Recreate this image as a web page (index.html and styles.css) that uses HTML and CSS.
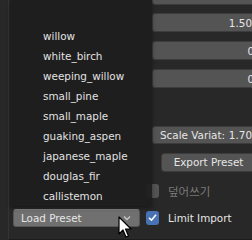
FILE: index.html
```html
<!DOCTYPE html>
<html lang="en">
<head>
    <meta charset="UTF-8">
    <title>Presets</title>
    <link rel="stylesheet" href="styles.css">
</head>
<body>
    <div class="panel">
        <div class="row row-stub">
            <div class="label"></div>
            <div class="field stub"></div>
        </div>
        <div class="row">
            <div class="label"></div>
            <div class="field"><span class="val">1.50</span></div>
        </div>
        <div class="row">
            <div class="label"></div>
            <div class="field"><span class="val cut">0</span></div>
        </div>
        <div class="row">
            <div class="label"></div>
            <div class="field"><span class="val cut">0</span></div>
        </div>
        <div class="row row-scale">
            <div class="label"></div>
            <div class="field split"><span>Scale Variat:</span><span class="val">1.70</span></div>
        </div>
        <div class="row row-btn">
            <div class="label"></div>
            <div class="btn">Export Preset</div>
        </div>
        <div class="row row-check">
            <div class="left"></div>
            <div class="check"><span class="box"></span><span class="check-label dim ko">덮어쓰기</span></div>
        </div>
        <div class="row row-check row-last">
            <div class="left">
                <div class="dropdown">
                    <span>Load Preset</span>
                    <svg class="chev" width="8" height="6" viewBox="0 0 8 6"><path d="M1 1.5 L4 4.5 L7 1.5" fill="none" stroke="#c8c8c8" stroke-width="1.3"/></svg>
                </div>
            </div>
            <div class="check"><span class="box on"><svg width="11" height="11" viewBox="0 0 11 11"><path d="M2 5.8 L4.5 8.2 L9 2.8" fill="none" stroke="#fff" stroke-width="1.6"/></svg></span><span class="check-label">Limit Import</span></div>
        </div>
    </div>

    <ul class="menu">
        <li>willow</li>
        <li>white_birch</li>
        <li>weeping_willow</li>
        <li>small_pine</li>
        <li>small_maple</li>
        <li>guaking_aspen</li>
        <li>japanese_maple</li>
        <li>douglas_fir</li>
        <li>callistemon</li>
    </ul>

    <svg class="cursor" width="15" height="24" viewBox="0 0 15 24">
        <path d="M1 1 L1 18 L5 14 L8 21 L10.5 20 L7.5 13 L13 13 Z" fill="#fff" stroke="#000" stroke-width="1.2" stroke-linejoin="round"/>
    </svg>
</body>
</html>
```

FILE: styles.css
```css
* {
    margin: 0;
    padding: 0;
    box-sizing: border-box;
}

body {
    width: 252px;
    height: 240px;
    overflow: hidden;
    background-color: #282828;
    color: #e6e6e6;
    font-family: 'DejaVu Sans', sans-serif;
    font-size: 10.4px;
    position: relative;
}

.panel {
    height: 240px;
    border-left: 1px solid #343434;
    margin-left: 8px;
    border-bottom: 1px solid #1c1c1c;
    display: flex;
    flex-direction: column;
}

.row {
    display: flex;
    margin-top: 9px;
}

.row-stub {
    margin-top: 0;
}

.label {
    width: 143px;
}

.field {
    width: 100px;
    height: 19px;
    background-color: #545454;
    border: 1px solid #3c3c3c;
    border-right: none;
    border-radius: 3px 0 0 3px;
    display: flex;
    align-items: center;
    justify-content: flex-end;
    white-space: nowrap;
    overflow: hidden;
}

.field .val {
    margin-right: 0;
}

.field .val.cut {
    margin-right: -2px;
}

.field.stub {
    height: 5px;
    border-top: none;
    border-radius: 0 0 0 3px;
}

.row-stub + .row {
    margin-top: 8px;
}

.row-scale {
    margin-top: 38px;
}

.row-scale .field {
    height: 18px;
    justify-content: space-between;
    padding-left: 7px;
}

.row-btn {
    margin-top: 9px;
}

.row-btn .label {
    width: 152px;
}

.btn {
    flex: 1;
    height: 19px;
    background-color: #545454;
    border: 1px solid #3c3c3c;
    border-right: none;
    border-radius: 4px 0 0 4px;
    text-align: center;
    line-height: 17px;
    padding-left: 3px;
}

.row-check {
    margin-top: 11px;
    height: 15px;
}

.row-last {
    margin-top: 10px;
    height: 19px;
    align-items: center;
}

.left {
    width: 137px;
    padding-left: 4px;
}

.dropdown {
    width: 127px;
    height: 18px;
    background-color: #707070;
    border: 1px solid #555;
    border-top-color: #808080;
    border-radius: 3px;
    display: flex;
    align-items: center;
    justify-content: space-between;
    padding: 0 8px 0 7px;
}

.check {
    display: flex;
    align-items: center;
    gap: 9px;
}

.box {
    width: 13px;
    height: 14px;
    border-radius: 3px;
    background-color: #545454;
    display: flex;
    align-items: center;
    justify-content: center;
}

.box.on {
    background-color: #4772b3;
}

.check-label.dim {
    color: #7a7a7a;
}

.check-label.ko {
    font-family: 'DejaVu Sans', 'Noto Sans CJK KR', sans-serif;
    font-size: 11.5px;
}

.menu {
    position: absolute;
    left: 10px;
    top: 0;
    width: 142px;
    height: 206px;
    background-color: rgba(30, 30, 30, 0.94);
    list-style: none;
    padding-top: 26px;
    box-shadow: 0 2px 4px rgba(0, 0, 0, 0.4);
}

.menu li {
    height: 20px;
    line-height: 20px;
    padding-left: 33px;
    color: #e2e2e2;
}

.cursor {
    position: absolute;
    left: 118px;
    top: 216px;
}
```
